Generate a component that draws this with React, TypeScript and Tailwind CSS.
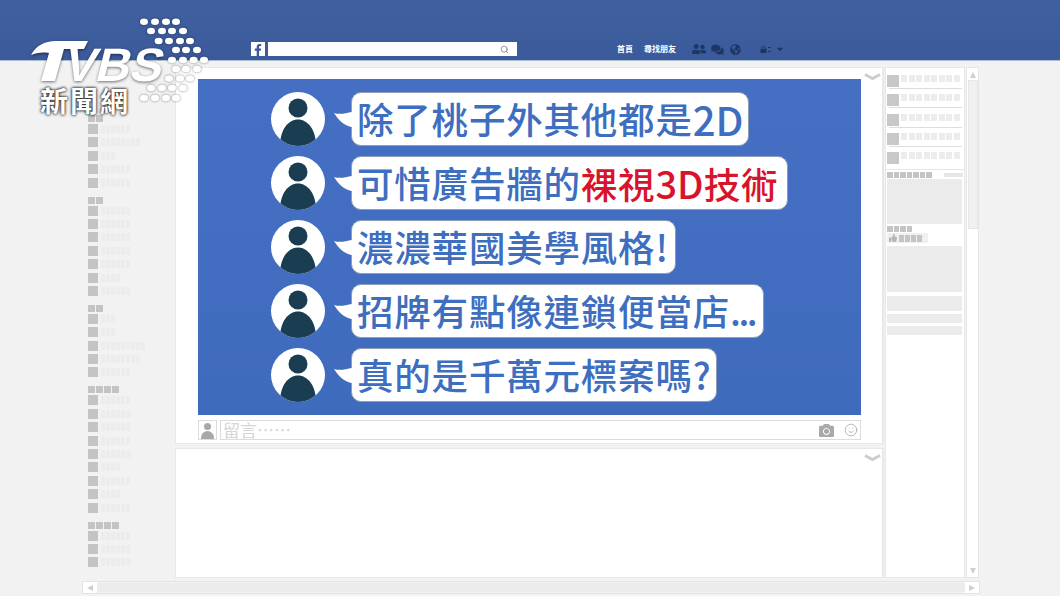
import React from "react";
import { Search, Smile } from "lucide-react";
import { FaFacebookF, FaUserFriends, FaComments, FaGlobeAmericas, FaLock, FaCaretDown, FaThumbsUp, FaCamera } from "react-icons/fa";

const CJK = "font-['Noto_Sans_CJK_TC','Noto_Sans_CJK_SC',sans-serif]";

function Blocks({ n, size = 4, gap = 1, color = "bg-[#ececec]", h = "h-[8px]" }: { n: number; size?: number; gap?: number; color?: string; h?: string }) {
  return (
    <div className="flex" style={{ gap }}>
      {Array.from({ length: n }).map((_, i) => (
        <div key={i} className={`${h} ${color}`} style={{ width: size }} />
      ))}
    </div>
  );
}

const sections: { head: number; items: number[] }[] = [
  { head: 2, items: [6, 8, 3, 6, 6] },
  { head: 2, items: [6, 6, 6, 6, 6, 4, 6] },
  { head: 2, items: [3, 3, 9, 8, 6] },
  { head: 4, items: [6, 6, 6, 6, 6, 4, 6, 4, 6] },
  { head: 4, items: [6, 6, 6] },
];

function Sidebar() {
  return (
    <div className="w-[93px] shrink-0 pl-[6px] pt-[48px] flex flex-col gap-[9px] blur-[0.7px]">
      {sections.map((s, i) => (
        <div key={i} className="flex flex-col gap-[2px]">
          <Blocks n={s.head} size={7} gap={1} color="bg-[#c4c4c4]" h="h-[7px]" />
          <div className="flex flex-col gap-[3.4px]">
            {s.items.map((w, j) => (
              <div key={j} className="flex items-center gap-[3px] h-[10px]">
                <div className="w-[10px] h-[10px] bg-[#c4c4c4]" />
                <Blocks n={w} />
              </div>
            ))}
          </div>
        </div>
      ))}
    </div>
  );
}

function Avatar() {
  return (
    <svg width="54" height="54" viewBox="0 0 54 54" className="shrink-0">
      <defs>
        <clipPath id="avc"><circle cx="27" cy="27" r="27" /></clipPath>
      </defs>
      <circle cx="27" cy="27" r="27" fill="#fff" />
      <circle cx="27" cy="16" r="9.5" fill="#1b3d52" />
      <path d="M9 54 C9 38 17 27.5 27 27.5 C37 27.5 45 38 45 54 Z" fill="#1b3d52" clipPath="url(#avc)" />
    </svg>
  );
}

function Row({ w, children }: { w: string; children: React.ReactNode }) {
  return (
    <div className="flex items-start h-[54px]">
      <Avatar />
      <svg width="19" height="36" viewBox="0 0 19 36" className="ml-[8px] shrink-0 -mr-px relative z-10">
        <path d="M1 21 C7 23 13 21 19 20 L19 35 C12 34 6 29 1 21 Z" fill="#fff" />
      </svg>
      <div className={`${w} h-[54px] bg-white rounded-[10px] border border-[#8f9db5] flex items-center pl-[5px] text-[36.5px] font-medium leading-none tracking-[0.8px] text-[#3d6ebf] whitespace-nowrap ${CJK}`}>
        {children}
      </div>
    </div>
  );
}

function Chevron() {
  return (
    <svg width="17" height="8" viewBox="0 0 17 8" className="block">
      <path d="M1 1.5 L8.5 5.5 L16 1.5" fill="none" stroke="#cdcdcd" strokeWidth="3" />
    </svg>
  );
}

function Logo() {
  const rows: [number, number[]][] = [
    [21.7, [144, 155, 166, 176]],
    [31, [151, 162, 172, 183]],
    [41, [158.6, 169, 180, 190]],
    [50, [176, 186, 197]],
    [60, [172, 183, 193.6, 204]],
    [69, [176, 186, 197]],
    [78.5, [169, 180, 190]],
    [88, [151, 162, 172, 183]],
    [98, [144, 155, 166, 176]],
  ];
  return (
    <div className="absolute left-0 top-0 w-[215px] h-[120px]">
      <svg width="215" height="120" viewBox="0 0 215 120" className="absolute left-0 top-0">
        {rows.map(([y, xs]) => xs.map((x) => <ellipse key={`${y}-${x}`} cx={x} cy={y} rx="4" ry="3.3" fill="#fff" className="[filter:drop-shadow(0_0_1px_rgba(0,0,0,0.5))]" />))}
        <g className="[filter:drop-shadow(0_1px_1.5px_rgba(0,0,0,0.55))]">
          <path d="M31 55 C36 46 44 41 56 41 L88 41 L84 49 L64 49 L55 81 L41 81 L49 53 C42 52 36 53 31 55 Z" fill="#fff" />
          <text x="0" y="0" transform="translate(62 81) skewX(-14)" fontFamily="'Liberation Sans', sans-serif" fontWeight="700" fontSize="47" fill="#fff" textLength="98" lengthAdjust="spacingAndGlyphs">VBS</text>
        </g>
      </svg>
      <div className={`absolute left-[40px] top-[84px] text-[28px] leading-[32px] font-bold text-white tracking-[2px] whitespace-nowrap [text-shadow:0_0_3px_#222,0_0_3px_#222] ${CJK}`}>新聞網</div>
    </div>
  );
}

function Tri({ cls }: { cls: string }) {
  return <div className={cls} />;
}

export default function App() {
  return (
    <div className="relative w-[1060px] h-[596px] overflow-hidden bg-[#f2f2f2] flex flex-col font-['Liberation_Sans',sans-serif]">
      <header className="h-[61px] shrink-0 bg-gradient-to-b from-[#41609f] to-[#3b5a9b] border-b border-[#a9bcd0] flex items-end pb-[4px] pl-[251px]">
        <div className="w-[14px] h-[14px] bg-white flex items-end justify-center overflow-hidden">
          <FaFacebookF className="text-[#3b5998] text-[12px]" />
        </div>
        <div className="ml-[3px] w-[249px] h-[14px] bg-white flex items-center justify-end pr-[8px]">
          <Search size={9} strokeWidth={2} className="text-[#777]" />
        </div>
        <div className={`ml-[100px] flex items-center h-[14px] text-[8px] font-bold text-white ${CJK}`}>
          <span className="w-[27px]">首頁</span>
          <span className="w-[48px]">尋找朋友</span>
          <FaUserFriends className="text-[#1f3566] text-[14px] w-[14px]" />
          <FaComments className="ml-[5px] text-[#1f3566] text-[13px]" />
          <FaGlobeAmericas className="ml-[6px] text-[#1f3566] text-[11px]" />
          <FaLock className="ml-[19px] text-[#1f3566] text-[7px]" />
          <span className="w-[3px] h-[5px] ml-px border-y border-[#1f3566]" />
          <FaCaretDown className="ml-[4px] text-[#1f3566] text-[10px]" />
        </div>
      </header>

      <div className="flex h-[511px] mt-[6px] shrink-0 pl-[82px]">
        <Sidebar />
        <main className="w-[709px] shrink-0 flex flex-col gap-[4px]">
          <section className="relative h-[377px] bg-white border border-r-2 border-[#e8e8e8] pl-[22px] pt-[11px]">
            <div className="absolute right-[1px] top-[5px]"><Chevron /></div>
            <div className="w-[663px] h-[336px] bg-gradient-to-b from-[#456fc3] to-[#3f6bbd] pt-[13px] pl-[73px] flex flex-col gap-[10px]">
              <Row w="w-[398px]">除了桃子外其他都是<span className="text-[40px] tracking-normal">2D</span></Row>
              <Row w="w-[437px]">可惜廣告牆的<span className="text-[#d8142c]">裸視<span className="text-[38px] tracking-normal">3D</span>技術</span></Row>
              <Row w="w-[325px]">濃濃華國美學風格!</Row>
              <Row w="w-[413px]">招牌有點像連鎖便當店<span className="tracking-[-2.5px]">...</span></Row>
              <Row w="w-[366px]">真的是千萬元標案嗎?</Row>
            </div>
            <div className="flex gap-[3px] mt-[5px] w-[663px] h-[20px]">
              <div className="w-[19px] h-[20px] border border-[#dcdcdc] bg-white flex flex-col items-center justify-end overflow-hidden">
                <div className="w-[7px] h-[7px] rounded-full bg-[#a8a8a8] mb-px" />
                <div className="w-[13px] h-[8px] rounded-t-full bg-[#a8a8a8]" />
              </div>
              <div className={`flex-1 border border-[#dcdcdc] bg-white flex items-center pl-[2px] pr-[2px] text-[17px] text-[#d6d6d6] ${CJK}`}>
                <span className="flex-1 leading-none -mt-[2px]">留言……</span>
                <FaCamera className="text-[#a9a9a9] text-[15px]" />
                <Smile size={14} strokeWidth={1.3} className="ml-[10px] text-[#a4a4a4]" />
              </div>
            </div>
          </section>
          <section className="relative flex-1 bg-white border border-r-2 border-[#e8e8e8]">
            <div className="absolute right-[1px] top-[5px]"><Chevron /></div>
          </section>
        </main>

        <aside className="ml-px w-[80px] shrink-0 bg-white border border-[#e8e8e8] flex flex-col pt-[7px] px-[1px] blur-[0.4px]">
          {[0, 1, 2, 3, 4].map((i) => (
            <div key={i} className="flex gap-[2px] h-[19.3px]">
              <div className="w-[12px] h-[12px] bg-[#c8c8c8]" />
              <div className="flex flex-col">
                <Blocks n={8} size={6} gap={1.5} h="h-[7px]" />
                {i < 4 && <div className="mt-[6px] -ml-[12px] w-[73px] h-px bg-[#dddddd]" />}
              </div>
            </div>
          ))}
          <div className="h-px bg-[#e6e6e6] -mx-px mt-[-2px]" />
          <div className="flex justify-between mt-[2px]">
            <Blocks n={7} size={5.5} gap={1} color="bg-[#c4c4c4]" h="h-[6px]" />
            <div className="w-[19px] h-[4px] mt-px bg-[#e6e6e6]" />
          </div>
          <div className="mt-[1px] h-[45px] w-[75px] bg-[#ebebeb]" />
          <div className="mt-[2px]"><Blocks n={4} size={5.5} gap={1} color="bg-[#c4c4c4]" h="h-[6px]" /></div>
          <div className="mt-[1px] w-[41px] h-[10px] bg-[#f0f0f0] flex items-center pl-[2px] gap-[2px]">
            <FaThumbsUp className="text-[#b5b5b5] text-[8px]" />
            <Blocks n={4} size={5} gap={1} color="bg-[#c4c4c4]" h="h-[7px]" />
          </div>
          <div className="mt-[3px] h-[46px] w-[75px] bg-[#ebebeb]" />
          <div className="mt-[4px] h-[15px] w-[75px] bg-[#ebebeb]" />
          <div className="mt-[3px] h-[9px] w-[75px] bg-[#ebebeb]" />
          <div className="mt-[3px] h-[9px] w-[75px] bg-[#ebebeb]" />
        </aside>

        <div className="ml-px w-[13px] shrink-0 bg-white border border-[#e6e6e6] flex flex-col items-center pt-[4px] pb-[3px]">
          <Tri cls="w-0 h-0 border-x-[3.5px] border-x-transparent border-b-[6px] border-b-[#cfcfcf]" />
          <div className="mt-[2px] w-[10px] h-[149px] bg-[#f0f0f0] border border-[#e6e6e6]" />
          <div className="flex-1" />
          <Tri cls="w-0 h-0 border-x-[3.5px] border-x-transparent border-t-[6px] border-t-[#cfcfcf]" />
        </div>
      </div>

      <div className="ml-[82px] mt-[3px] w-[898px] h-[13px] bg-[#f2f2f2] border border-[#e4e4e4] flex items-center">
        <div className="w-[14px] h-full bg-white flex items-center justify-center">
          <div className="w-0 h-0 border-y-[3.5px] border-y-transparent border-r-[6px] border-r-[#cfcfcf]" />
        </div>
        <div className="flex-1 h-[9px] bg-[#ececec]" />
        <div className="w-[14px] h-full bg-white flex items-center justify-center">
          <div className="w-0 h-0 border-y-[3.5px] border-y-transparent border-l-[6px] border-l-[#cfcfcf]" />
        </div>
      </div>

      <Logo />
    </div>
  );
}
